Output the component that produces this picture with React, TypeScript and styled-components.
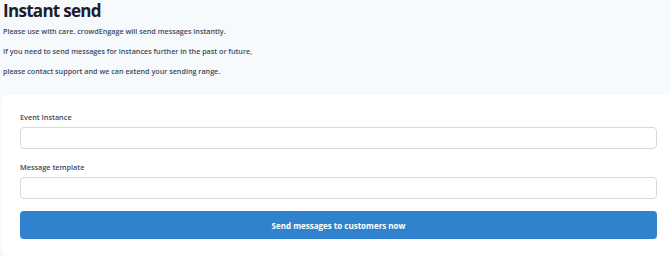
import React, { useState } from 'react';
import styled, { createGlobalStyle } from 'styled-components';

const GlobalStyle = createGlobalStyle`
  html, body {
    margin: 0;
    padding: 0;
    background: #f7fafc;
    overflow: hidden;
    font-family: "Open Sans", "Noto Sans", sans-serif;
  }
  * { box-sizing: border-box; }
`;

const Page = styled.div`
  width: 670px;
  height: 256px;
  display: flex;
  flex-direction: column;
`;

const Intro = styled.div`
  padding: 0 0 0 3px;
  height: 95px;
`;

const Heading = styled.h1`
  margin: 0;
  font-size: 17px;
  line-height: 21px;
  font-weight: 700;
  letter-spacing: -0.7px;
  color: #1a202c;
`;

const Note = styled.p`
  margin: 0;
  font-size: 7.2px;
  line-height: 20px;
  font-weight: 600;
  color: #3f4a5c;
`;

const Card = styled.div`
  margin-left: 2px;
  flex: 1;
  background: #ffffff;
  border-radius: 6px 0 0 6px;
  padding: 14px 13px 14px 18px;
  display: flex;
  flex-direction: column;
`;

const Field = styled.div<{ $gap: number }>`
  display: flex;
  flex-direction: column;
  margin-bottom: ${(p) => p.$gap}px;
`;

const Label = styled.label`
  font-size: 7.3px;
  line-height: 16px;
  font-weight: 600;
  color: #3f4a5c;
  margin-bottom: 2px;
`;

const Input = styled.input`
  width: 100%;
  height: 22px;
  border: 1px solid #d3dae3;
  border-radius: 4px;
  background: #fff;
  outline: none;
  font-family: inherit;
`;

const SendButton = styled.button`
  width: 100%;
  height: 28px;
  border: none;
  border-radius: 4px;
  background: #3182ce;
  color: #ffffff;
  font-family: inherit;
  font-size: 8px;
  font-weight: 700;
  cursor: pointer;
`;

export default function App() {
  const [instance, setInstance] = useState('');
  const [template, setTemplate] = useState('');

  return (
    <Page>
      <GlobalStyle />
      <Intro>
        <Heading>Instant send</Heading>
        <Note>Please use with care. crowdEngage will send messages instantly.</Note>
        <Note>If you need to send messages for instances further in the past or future,</Note>
        <Note>please contact support and we can extend your sending range.</Note>
      </Intro>
      <Card>
        <Field $gap={10}>
          <Label htmlFor="instance">Event Instance</Label>
          <Input id="instance" value={instance} onChange={(e) => setInstance(e.target.value)} />
        </Field>
        <Field $gap={12}>
          <Label htmlFor="template">Message template</Label>
          <Input id="template" value={template} onChange={(e) => setTemplate(e.target.value)} />
        </Field>
        <SendButton>Send messages to customers now</SendButton>
      </Card>
    </Page>
  );
}
